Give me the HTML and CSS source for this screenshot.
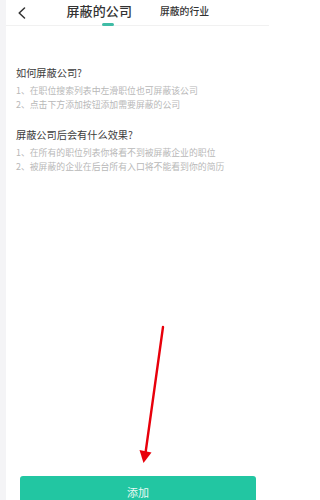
FILE: index.html
```html
<!DOCTYPE html>
<html lang="zh">
<head>
<meta charset="utf-8">
<link rel="stylesheet" href="styles.css">
</head>
<body>
<div class="app">
  <header class="topbar">
    <span class="back">
      <svg width="8" height="12" viewBox="0 0 8 12"><polyline points="6.5,1 1.2,6 6.5,11" fill="none" stroke="#333" stroke-width="1.5" stroke-linecap="round" stroke-linejoin="round"/></svg>
    </span>
    <div class="tab tab-active">
      <span class="tab-label">屏蔽的公司</span>
      <span class="tab-indicator"></span>
    </div>
    <div class="tab tab-other">
      <span class="tab-label">屏蔽的行业</span>
    </div>
  </header>
  <main class="content">
    <section class="faq">
      <h2 class="faq-title">如何屏蔽公司?</h2>
      <p class="faq-line">1、在职位搜索列表中左滑职位也可屏蔽该公司</p>
      <p class="faq-line">2、点击下方添加按钮添加需要屏蔽的公司</p>
    </section>
    <section class="faq faq-second">
      <h2 class="faq-title">屏蔽公司后会有什么效果?</h2>
      <p class="faq-line">1、在所有的职位列表你将看不到被屏蔽企业的职位</p>
      <p class="faq-line">2、被屏蔽的企业在后台所有入口将不能看到你的简历</p>
    </section>
  </main>
  <footer class="footer">
    <button class="add-btn">添加</button>
  </footer>
</div>
<svg class="annotation" width="269" height="500" viewBox="0 0 269 500">
  <line x1="163" y1="327" x2="145.5" y2="453" stroke="#e8000b" stroke-width="2.4" stroke-linecap="round"/>
  <polygon points="139.5,450 151.5,452.5 143.5,463" fill="#e8000b"/>
</svg>
</body>
</html>
```

FILE: styles.css
```css
html {
  margin: 0;
  padding: 0;
  height: 500px;
  overflow: hidden;
  background: #ffffff;
}
body {
  margin: 0;
  padding: 0;
  width: 269px;
  height: 500px;
  overflow: hidden;
  background: #f4f4f6;
  font-family: "Noto Sans CJK SC", "Noto Sans", sans-serif;
  position: relative;
}
.app {
  margin-left: 6px;
  background: #ffffff;
  height: 508px;
  display: flex;
  flex-direction: column;
}
.topbar {
  height: 25px;
  border-bottom: 1px solid #f1f1f1;
  display: flex;
  align-items: flex-start;
  box-sizing: content-box;
}
.back {
  display: block;
  margin-left: 12px;
  margin-top: 7px;
  width: 8px;
  height: 12px;
}
.back svg { display: block; }
.tab {
  display: flex;
  flex-direction: column;
  align-items: flex-start;
}
.tab-active {
  margin-left: 40.5px;
  padding-top: 3px;
}
.tab-active .tab-label {
  font-size: 13px;
  line-height: 16px;
  font-weight: 500;
  color: #333;
  letter-spacing: 0.1px;
}
.tab-indicator {
  display: block;
  width: 12px;
  height: 2.5px;
  border-radius: 2px;
  background: #3fbca6;
  margin-top: 4px;
  margin-left: 35px;
}
.tab-other {
  margin-left: 28px;
  padding-top: 5px;
}
.tab-other .tab-label {
  font-size: 9.8px;
  line-height: 12px;
  font-weight: 500;
  color: #333;
}
.content {
  padding-left: 10px;
}
.faq {
  margin-top: 40px;
}
.faq-second {
  margin-top: 16px;
}
.faq-title {
  margin: 0 0 4px;
  font-size: 10.2px;
  line-height: 14px;
  font-weight: 400;
  color: #3c3c3c;
}
.faq-line {
  margin: 0;
  font-size: 8.85px;
  line-height: 14px;
  color: #b8b8b8;
}
.footer {
  margin-top: auto;
  padding: 0 13px 0 14px;
}
.add-btn {
  display: block;
  width: 100%;
  height: 32px;
  border: none;
  border-radius: 3px;
  background: #22c6a2;
  color: #eafaf5;
  font-family: "Noto Sans CJK SC", "Noto Sans", sans-serif;
  font-size: 11px;
  padding: 0;
}
.annotation {
  position: absolute;
  left: 0;
  top: 0;
  pointer-events: none;
}
```
